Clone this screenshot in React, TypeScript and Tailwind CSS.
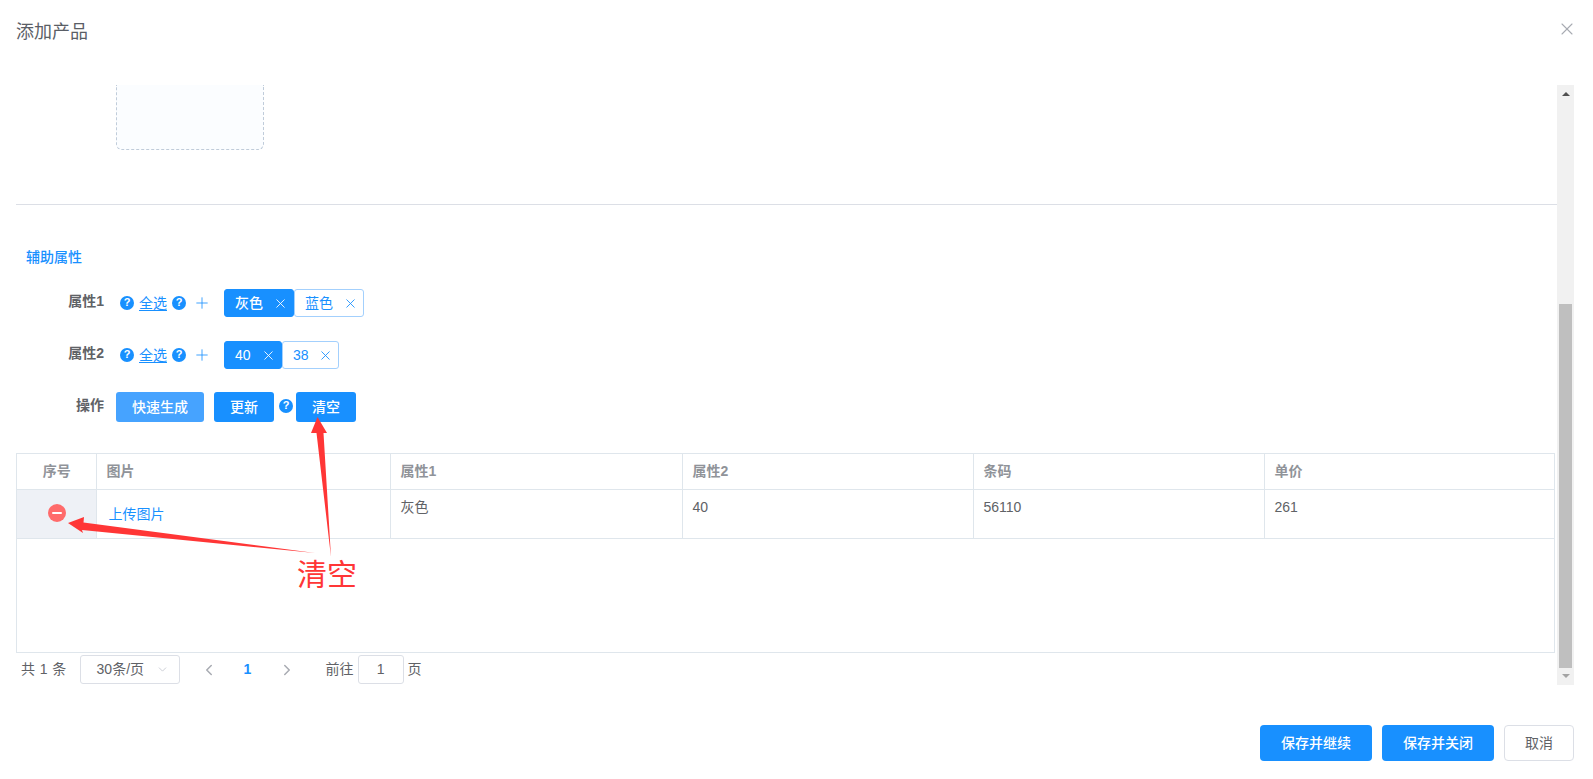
import { X, Plus, ChevronDown, ChevronLeft, ChevronRight } from 'lucide-react';

const font = { fontFamily: '"Liberation Sans", "Noto Sans CJK SC", sans-serif' };

function Help() {
  return (
    <span className="flex w-[14px] h-[14px] flex-none items-center justify-center rounded-full bg-[#1890ff] text-[11px] font-bold leading-none text-white">
      ?
    </span>
  );
}

function Tag({ label, active, width }: { label: string; active?: boolean; width: string }) {
  return (
    <span
      className={`flex h-[28px] items-center justify-between rounded-[3px] border pl-[10px] pr-[5px] text-[14px] ${width} ${
        active ? 'border-[#1890ff] bg-[#1890ff] font-medium text-white' : 'border-[#a3d0fd] bg-white text-[#1890ff]'
      }`}
    >
      {label}
      <X className={`h-[15px] w-[15px] ${active ? 'text-white' : 'text-[#1890ff]'}`} strokeWidth={1.4} />
    </span>
  );
}

function AttrRow({ label, tags, className }: { label: string; tags: { label: string; active?: boolean; width: string }[]; className: string }) {
  return (
    <div className={`flex h-[28px] items-center ${className}`}>
      <span className="w-[88px] text-right text-[14px] font-bold leading-none text-[#606266] -mt-[5px]">{label}</span>
      <span className="ml-[16px] -mt-[1px]"><Help /></span>
      <a className="ml-[5px] text-[14px] text-[#1890ff] underline decoration-[#1890ff] underline-offset-2">全选</a>
      <span className="ml-[5px] -mt-[1px]"><Help /></span>
      <Plus className="ml-[7px] h-[18px] w-[18px] text-[#1890ff]" strokeWidth={1.1} />
      <div className="ml-[13px] flex">
        {tags.map((t) => (
          <Tag key={t.label} {...t} />
        ))}
      </div>
    </div>
  );
}

const headers = ['图片', '属性1', '属性2', '条码', '单价'];
const cells = ['灰色', '40', '56110', '261'];

export default function App() {
  return (
    <div style={font} className="relative flex h-[779px] w-[1593px] flex-col overflow-hidden bg-white">
      <header className="flex h-[85px] flex-none justify-between pl-4 pr-[16px] pt-[20px]">
        <h2 className="text-[18px] leading-[24px] text-[#5a5e66]">添加产品</h2>
        <X className="-mt-[1px] h-[20px] w-[20px] text-[#a8abb2]" strokeWidth={1.3} />
      </header>

      <div className="flex h-[600px] flex-none pl-4 pr-[19px]">
        <main className="min-w-0 flex-1 overflow-hidden">
          <div className="ml-[100px] h-[65px] w-[148px] rounded-b-[6px] border border-t-0 border-dashed border-[#c0ccda] bg-[#fbfdff]" />
          <div className="mt-[54px] h-px bg-[#dcdfe6]" />
          <h3 className="ml-[10px] mt-[42px] text-[14px] font-medium leading-[20px] text-[#1890ff]">辅助属性</h3>

          <AttrRow
            className="mt-[22px]"
            label="属性1"
            tags={[
              { label: '灰色', active: true, width: 'w-[70px]' },
              { label: '蓝色', width: 'w-[70px]' },
            ]}
          />
          <AttrRow
            className="mt-[24px]"
            label="属性2"
            tags={[
              { label: '40', active: true, width: 'w-[58px]' },
              { label: '38', width: 'w-[57px]' },
            ]}
          />

          <div className="mt-[23px] flex h-[30px] items-center">
            <span className="w-[88px] text-right text-[14px] font-bold leading-none text-[#606266] -mt-[5px]">操作</span>
            <button className="ml-[12px] h-[30px] w-[88px] rounded-[3px] bg-[#46a3ff] text-[14px] font-medium text-white">快速生成</button>
            <button className="ml-[10px] h-[30px] w-[60px] rounded-[3px] bg-[#1890ff] text-[14px] font-medium text-white">更新</button>
            <span className="ml-[5px] -mt-[3px]"><Help /></span>
            <button className="ml-[3px] h-[30px] w-[60px] rounded-[3px] bg-[#1890ff] text-[14px] font-medium text-white">清空</button>
          </div>

          <div className="mr-[2px] mt-[31px] h-[200px] border border-[#dfe6ec]">
            <table className="w-full table-fixed border-collapse text-[14px]">
              <colgroup>
                <col className="w-[79px]" />
                <col className="w-[294px]" />
                <col className="w-[292px]" />
                <col className="w-[291px]" />
                <col className="w-[291px]" />
                <col />
              </colgroup>
              <thead>
                <tr className="h-[35px] border-b border-[#dfe6ec] text-[#909399]">
                  <th className="border-r border-[#dfe6ec] pl-[1px] text-center font-bold">序号</th>
                  {headers.map((h) => (
                    <th key={h} className="border-r border-[#dfe6ec] pl-[10px] text-left font-bold last:border-r-0">
                      {h}
                    </th>
                  ))}
                </tr>
              </thead>
              <tbody>
                <tr className="h-[49px] border-b border-[#dfe6ec]">
                  <td className="border-r border-[#dfe6ec] bg-[#eef1f6] pl-[1px] align-top">
                    <span className="mx-auto mt-[14px] flex h-[18px] w-[18px] items-center justify-center rounded-full bg-[#ff6b6b]">
                      <span className="h-[2px] w-[10px] rounded-full bg-white" />
                    </span>
                  </td>
                  <td className="border-r border-[#dfe6ec] pl-[12px] pt-[2px] text-[#1890ff]">上传图片</td>
                  {cells.map((c) => (
                    <td key={c} className="border-r border-[#dfe6ec] pl-[10px] align-top pt-[7px] leading-[20px] text-[#606266] last:border-r-0">
                      {c}
                    </td>
                  ))}
                </tr>
              </tbody>
            </table>
          </div>

          <div className="mt-[2px] flex h-[29px] items-center text-[14px] text-[#606266]">
            <span className="ml-[5px] tracking-[0.4px]">共 1 条</span>
            <div className="ml-[13px] flex h-[29px] w-[100px] items-center justify-between rounded-[3px] border border-[#dcdfe6] pl-[16px] pr-[10px]">
              30条/页
              <ChevronDown className="h-[13px] w-[13px] text-[#c0c4cc]" strokeWidth={1.5} />
            </div>
            <ChevronLeft className="ml-[20px] h-[18px] w-[18px] text-[#a8abb2]" strokeWidth={2} />
            <span className="ml-[26px] w-[10px] font-bold text-[#1890ff]">1</span>
            <ChevronRight className="ml-[24px] h-[18px] w-[18px] text-[#a8abb2]" strokeWidth={2} />
            <span className="ml-[30px]">前往</span>
            <div className="ml-[4px] flex h-[29px] w-[46px] items-center justify-center rounded-[3px] border border-[#dcdfe6]">1</div>
            <span className="ml-[4px]">页</span>
          </div>
        </main>

        <div className="relative w-[17px] flex-none bg-[#f1f1f1]">
          <span className="absolute left-[5px] top-[7px] h-0 w-0 border-x-[4px] border-b-[4px] border-x-transparent border-b-[#505050]" />
          <span className="absolute left-[2px] top-[219px] h-[364px] w-[13px] bg-[#bfbfbf]" />
          <span className="absolute bottom-[7px] left-[5px] h-0 w-0 border-x-[4px] border-t-[4px] border-x-transparent border-t-[#a3a3a3]" />
        </div>
      </div>

      <footer className="flex flex-1 items-start justify-end gap-[10px] pr-[19px] pt-[40px] text-[14px]">
        <button className="h-[36px] w-[112px] rounded-[4px] bg-[#1890ff] font-medium text-white">保存并继续</button>
        <button className="h-[36px] w-[112px] rounded-[4px] bg-[#1890ff] font-medium text-white">保存并关闭</button>
        <button className="h-[36px] w-[70px] rounded-[4px] border border-[#dcdfe6] bg-white text-[#606266]">取消</button>
      </footer>

      {/* red annotation drawn over the page */}
      <svg className="pointer-events-none absolute left-0 top-0" width="1593" height="779">
        <polygon fill="#ff3636" points="317.5,417 327,433 323.5,433 331,557 316.5,433 311,433" />
        <polygon fill="#ff3636" points="68,523 84,517 83.5,522.5 315,553 82,530 83,533" />
      </svg>
      <span className="absolute left-[297px] top-[555px] text-[30px] leading-[40px] text-[#ff3636]">清空</span>
    </div>
  );
}
